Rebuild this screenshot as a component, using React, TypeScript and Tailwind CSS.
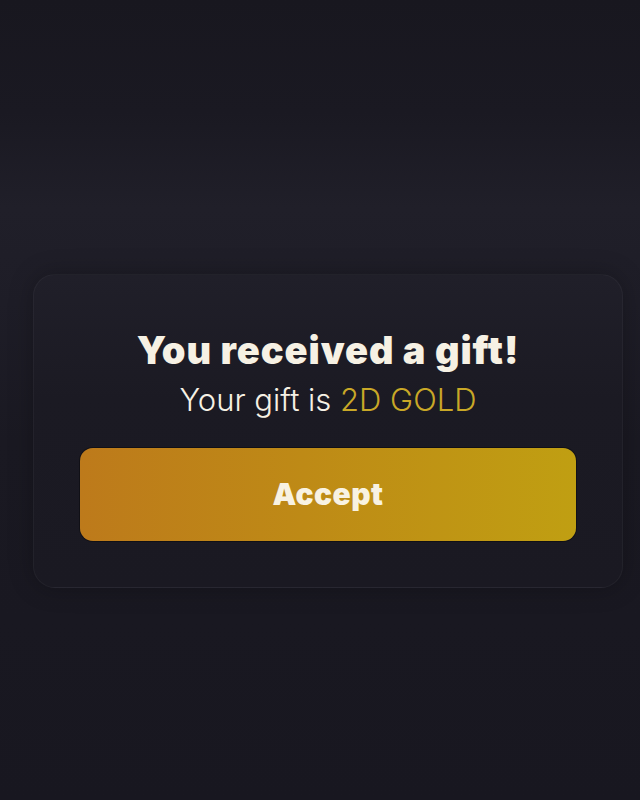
import React from 'react';

export default function App() {
  return (
    <main className="h-[800px] w-full bg-[linear-gradient(180deg,#18171f_0%,#1a1922_14%,#201f29_26%,#1e1d27_38%,#1a1922_55%,#181720_100%)] font-['Inter','Noto_Sans',sans-serif] flex flex-col">
      <div className="h-[274px]" />
      <section className="ml-[33px] w-[590px] h-[314px] rounded-[22px] border border-white/[0.04] bg-[linear-gradient(180deg,#201f29_0%,#1b1a23_40%,#1a1922_100%)] shadow-[0_0_24px_rgba(0,0,0,0.25)] flex flex-col items-center px-[46px] pt-[52px]">
        <h1 className="text-[38px] leading-[46px] font-black text-[#f6f1e4] tracking-[0.024em] whitespace-nowrap">
          You received a gift!
        </h1>
        <p className="mt-[8px] text-[31px] leading-[38px] font-light text-[#f6f1e4] whitespace-nowrap">
          Your gift is <span className="text-[#c9a827]">2D GOLD</span>
        </p>
        <button className="mt-[29px] w-full h-[93px] rounded-[13px] bg-[linear-gradient(90deg,#bd7a1b_0%,#be8a16_45%,#c09f12_100%)] text-[30px] font-black text-[#f8f2e2] tracking-[0.015em] shadow-[0_0_0_1px_rgba(0,0,0,0.35)]">
          Accept
        </button>
      </section>
    </main>
  );
}
